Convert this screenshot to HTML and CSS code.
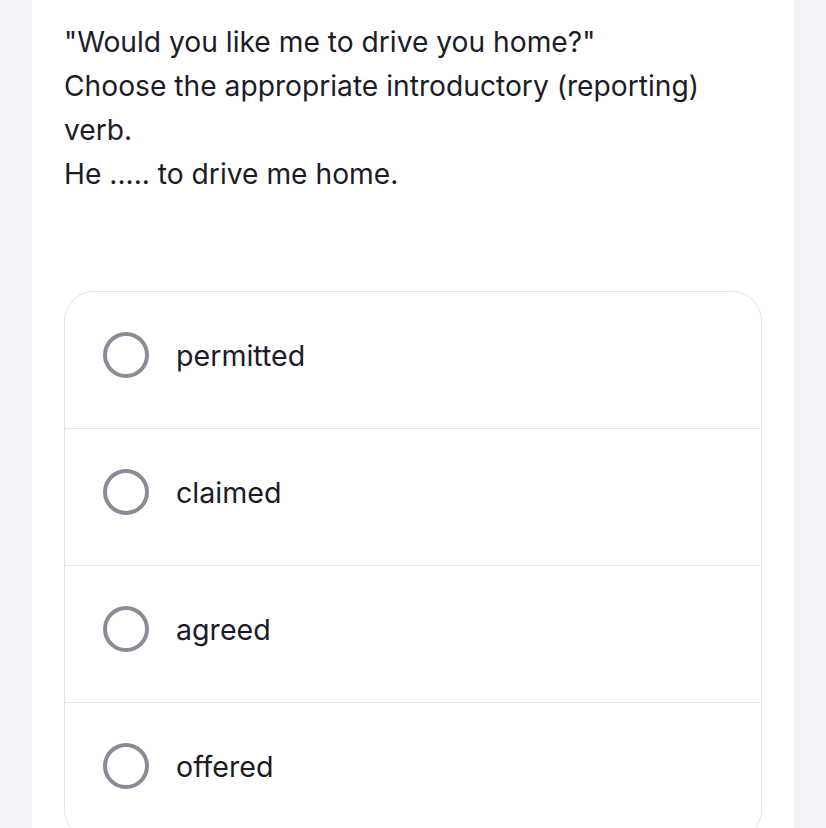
FILE: index.html
```html
<!DOCTYPE html>
<html lang="en">
<head>
<meta charset="utf-8">
<title>Question</title>
<link rel="stylesheet" href="styles.css">
</head>
<body>
<main class="panel">
  <div class="question">
    <p>"Would you like me to drive you home?"</p>
    <p>Choose the appropriate introductory (reporting) verb.</p>
    <p>He ..... to drive me home.</p>
  </div>
  <ul class="options">
    <li class="option"><span class="radio"></span><span class="label">permitted</span></li>
    <li class="option"><span class="radio"></span><span class="label">claimed</span></li>
    <li class="option"><span class="radio"></span><span class="label">agreed</span></li>
    <li class="option"><span class="radio"></span><span class="label">offered</span></li>
  </ul>
</main>
</body>
</html>
```

FILE: styles.css
```css
* { box-sizing: border-box; }
html, body {
  margin: 0;
  padding: 0;
  background: #f2f2f7;
  height: 828px;
  overflow: hidden;
}
body {
  font-family: Inter, "Noto Sans", sans-serif;
  color: #1c1c28;
}
.panel {
  margin: 0 32px;
  background: #ffffff;
  min-height: 828px;
  padding: 20px 32px 0 32px;
}
.question {
  font-size: 28.2px;
  line-height: 44px;
}
.question p {
  margin: 0;
}
.options {
  list-style: none;
  margin: 95px 0 0 0;
  padding: 0;
  border: 1px solid #e4e4e9;
  border-radius: 30px;
  overflow: hidden;
}
.option {
  display: flex;
  align-items: center;
  height: 137px;
  padding-left: 38px;
  padding-bottom: 10px;
  gap: 27px;
  border-top: 1px solid #e4e4e9;
}
.option:first-child {
  border-top: none;
  height: 136px;
}
.radio {
  width: 46px;
  height: 46px;
  border-radius: 50%;
  border: 4px solid #8b8b97;
  flex: none;
}
.label {
  font-size: 28.6px;
  color: #1c1c28;
}
```
